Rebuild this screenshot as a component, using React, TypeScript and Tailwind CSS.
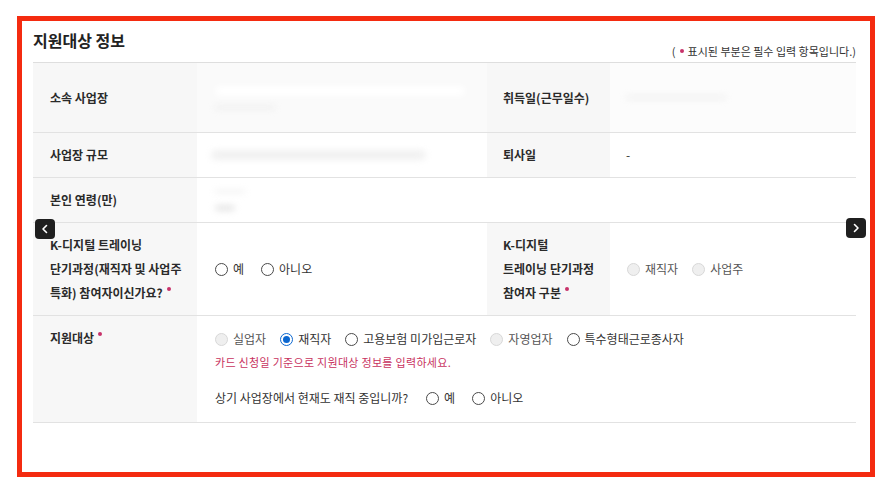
import React from "react";

type RadioKind = "off" | "on" | "disabled";

function Radio({ kind, label }: { kind: RadioKind; label: string }) {
  return (
    <span className="inline-flex items-center gap-[5px]">
      {kind === "on" ? (
        <span className="w-[13px] h-[13px] rounded-full border-[1.5px] border-[#0b67d0] bg-white flex items-center justify-center">
          <span className="w-[7px] h-[7px] rounded-full bg-[#0b67d0]" />
        </span>
      ) : kind === "disabled" ? (
        <span className="w-[13px] h-[13px] rounded-full border border-[#d8d8d8] bg-[#efefef]" />
      ) : (
        <span className="w-[13px] h-[13px] rounded-full border border-[#4a4a4a] bg-white" />
      )}
      <span className={kind === "disabled" ? "text-[#555]" : "text-[#333]"}>{label}</span>
    </span>
  );
}

function Dot() {
  return <span className="inline-block w-[4px] h-[4px] rounded-full bg-[#c8326a] ml-[4px] relative top-[-7px]" />;
}

function Blur({ className }: { className: string }) {
  return <div className={"rounded-full blur-[3px] " + className} />;
}

export default function App() {
  return (
    <div
      className="w-[879px] h-[493px] bg-white pt-4 pl-[17px]"
      style={{ fontFamily: '"Noto Sans CJK KR", "Noto Sans", sans-serif' }}
    >
      <div className="relative w-[858px] h-[461px] border-[5px] border-[#f42b10] pl-[11px] pr-[14px] pt-[7px]">
        {/* header */}
        <div className="flex items-end justify-between h-[34px]">
          <h2 className="text-[16px] font-bold text-[#222] leading-[24px] self-start">지원대상 정보</h2>
          <p className="text-[11px] text-[#333] leading-[16px] mb-[3px] flex items-center">
            (<span className="inline-block w-[4px] h-[4px] rounded-full bg-[#c8326a] mx-[4px]" />표시된 부분은 필수 입력 항목입니다.)
          </p>
        </div>

        {/* table */}
        <div className="border-t border-[#dedede] text-[12px] leading-[24px] text-[#333]">
          {/* row 1 */}
          <div className="flex h-[70px] border-b border-[#e2e2e2]">
            <div className="w-[164px] bg-[#f7f7f7] pl-[17px] flex items-center font-semibold text-[#2a2a2a]">소속 사업장</div>
            <div className="w-[290px] bg-[#fafafa] pl-[18px] pr-[14px] flex flex-col justify-center gap-[10px]">
              <Blur className="h-[10px] w-[250px] bg-white" />
              <Blur className="h-[3px] w-[60px] bg-[#ececec]" />
            </div>
            <div className="w-[123px] bg-[#f7f7f7] pl-[16px] flex items-center font-semibold text-[#2a2a2a]">취득일(근무일수)</div>
            <div className="flex-1 bg-[#fcfcfc] pl-[16px] flex items-center">
              <Blur className="h-[3px] w-[100px] bg-[#ededed]" />
            </div>
          </div>
          {/* row 2 */}
          <div className="flex h-[45px] border-b border-[#e2e2e2]">
            <div className="w-[164px] bg-[#f7f7f7] pl-[17px] flex items-center font-semibold text-[#2a2a2a]">사업장 규모</div>
            <div className="w-[290px] pl-[14px] flex items-center">
              <Blur className="h-[10px] w-[215px] bg-[#f1f1f1]" />
            </div>
            <div className="w-[123px] bg-[#f7f7f7] pl-[16px] flex items-center font-semibold text-[#2a2a2a]">퇴사일</div>
            <div className="flex-1 pl-[16px] flex items-center">-</div>
          </div>
          {/* row 3 */}
          <div className="flex h-[45px] border-b border-[#e2e2e2]">
            <div className="w-[164px] bg-[#f7f7f7] pl-[17px] flex items-center font-semibold text-[#2a2a2a]">본인 연령(만)</div>
            <div className="flex-1 pl-[18px] flex flex-col justify-center gap-[12px]">
              <Blur className="h-[3px] w-[30px] bg-[#efefef]" />
              <Blur className="h-[6px] w-[20px] bg-[#e6e6e6]" />
            </div>
          </div>
          {/* row 4 */}
          <div className="flex h-[93px] border-b border-[#e2e2e2]">
            <div className="w-[164px] bg-[#f7f7f7] pl-[17px] flex items-center font-semibold text-[#2a2a2a]">
              <div>
                K-디지털 트레이닝
                <br />
                단기과정(재직자 및 사업주
                <br />
                특화) 참여자이신가요?
                <Dot />
              </div>
            </div>
            <div className="w-[290px] pl-[18px] flex items-center gap-[17px]">
              <Radio kind="off" label="예" />
              <Radio kind="off" label="아니오" />
            </div>
            <div className="w-[123px] bg-[#f7f7f7] pl-[16px] flex items-center font-semibold text-[#2a2a2a]">
              <div>
                K-디지털
                <br />
                트레이닝 단기과정
                <br />
                참여자 구분
                <Dot />
              </div>
            </div>
            <div className="flex-1 pl-[17px] flex items-center gap-[14px]">
              <Radio kind="disabled" label="재직자" />
              <Radio kind="disabled" label="사업주" />
            </div>
          </div>
          {/* row 5 */}
          <div className="flex h-[107px] border-b border-[#e2e2e2]">
            <div className="w-[164px] bg-[#f7f7f7] pl-[17px] pt-[10px] font-semibold text-[#2a2a2a]">
              지원대상
              <Dot />
            </div>
            <div className="flex-1 pl-[18px] pt-[11px]">
              <div className="flex items-center gap-[14px]">
                <Radio kind="disabled" label="실업자" />
                <Radio kind="on" label="재직자" />
                <Radio kind="off" label="고용보험 미가입근로자" />
                <Radio kind="disabled" label="자영업자" />
                <Radio kind="off" label="특수형태근로종사자" />
              </div>
              <p className="text-[11px] text-[#c8325e] leading-[22px] tracking-[0.3px]">카드 신청일 기준으로 지원대상 정보를 입력하세요.</p>
              <div className="flex items-center gap-[17px] mt-[13px]">
                <span className="mr-[1px]">상기 사업장에서 현재도 재직 중입니까?</span>
                <Radio kind="off" label="예" />
                <Radio kind="off" label="아니오" />
              </div>
            </div>
          </div>
        </div>

        {/* slider arrows */}
        <button className="absolute left-[13px] top-[198px] w-[20px] h-[20px] rounded-[4px] bg-[#1f1f1f] flex items-center justify-center">
          <svg width="10" height="10" viewBox="0 0 10 10" fill="none" stroke="#fff" strokeWidth="1.6" strokeLinecap="round" strokeLinejoin="round">
            <path d="M6.5 1.5 3 5l3.5 3.5" />
          </svg>
        </button>
        <button className="absolute right-[4px] top-[197px] w-[20px] h-[20px] rounded-[4px] bg-[#1f1f1f] flex items-center justify-center">
          <svg width="10" height="10" viewBox="0 0 10 10" fill="none" stroke="#fff" strokeWidth="1.6" strokeLinecap="round" strokeLinejoin="round">
            <path d="M3.5 1.5 7 5 3.5 8.5" />
          </svg>
        </button>
      </div>
    </div>
  );
}
